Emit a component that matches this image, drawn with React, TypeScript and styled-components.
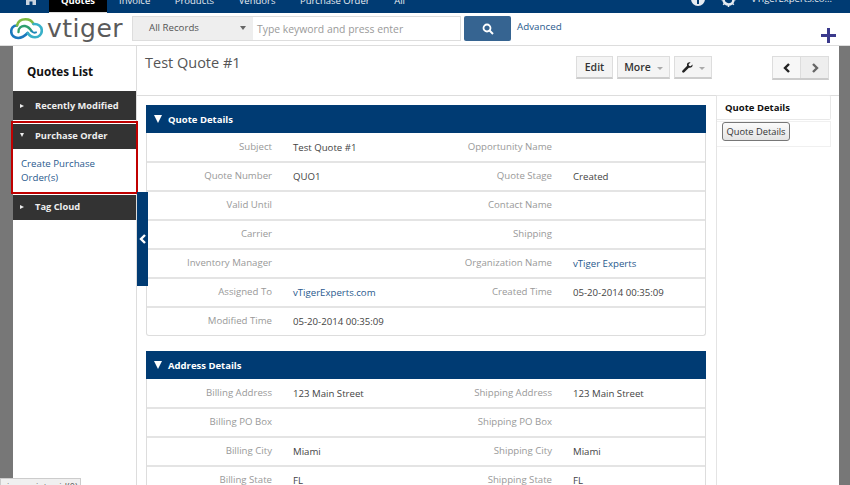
import styled, { createGlobalStyle } from 'styled-components'

const GlobalStyle = createGlobalStyle`
  html, body {
    margin: 0;
    padding: 0;
    overflow: hidden;
    background: #fff;
    font-family: 'Open Sans', 'Liberation Sans', sans-serif;
  }
  * { box-sizing: border-box; }
`

const navItems = ['Invoice', 'Products', 'Vendors', 'Purchase Order']

const quoteRows = [
  ['Subject', 'Test Quote #1', 'Opportunity Name', ''],
  ['Quote Number', 'QUO1', 'Quote Stage', 'Created'],
  ['Valid Until', '', 'Contact Name', ''],
  ['Carrier', '', 'Shipping', ''],
  ['Inventory Manager', '', 'Organization Name', 'vTiger Experts'],
  ['Assigned To', 'vTigerExperts.com', 'Created Time', '05-20-2014 00:35:09'],
  ['Modified Time', '05-20-2014 00:35:09', '', ''],
]

const addressRows = [
  ['Billing Address', '123 Main Street', 'Shipping Address', '123 Main Street'],
  ['Billing PO Box', '', 'Shipping PO Box', ''],
  ['Billing City', 'Miami', 'Shipping City', 'Miami'],
  ['Billing State', 'FL', 'Shipping State', 'FL'],
]

const linkValues = ['vTiger Experts', 'vTigerExperts.com']

function Logo() {
  return (
    <svg width="33" height="23" viewBox="0 0 33 23">
      <path d="M7 7.500C3 7.500 1.200 10.500 1.200 13.500c0 4 3.300 6.500 7 6.500 4.500 0 7-2.500 9.500-5" fill="none" stroke="#1b78bd" strokeWidth="2.600" strokeLinecap="round" />
      <path d="M7 7.500C8 3.500 11.500 1.300 15.500 1.300c3.500 0 6.500 1.700 8 4.700" fill="none" stroke="#7dbb42" strokeWidth="2.600" strokeLinecap="round" />
      <path d="M23.500 6c4.500-.5 8.300 2.500 8.300 6.500 0 4-3 6.800-6.800 6.800-3 0-5.500-1.500-7.300-4.300" fill="none" stroke="#38b0c8" strokeWidth="2.600" strokeLinecap="round" />
      <path d="M8.500 14c-.5-4 3-6.500 6.500-6 3 .5 5 2.500 6.500 5" fill="none" stroke="#2f9e6e" strokeWidth="2.400" strokeLinecap="round" />
      <path d="M21.500 13c1.200 1.500 3 2 4.500 1.300" fill="none" stroke="#1f86b8" strokeWidth="2" strokeLinecap="round" />
    </svg>
  )
}

function Wrench() {
  return (
    <svg width="11" height="11" viewBox="0 0 12 12">
      <path d="M11.500 2.600 9.400 4.600 7.600 4.200 7.200 2.500 9.300.5C7.700-.1 5.600.9 5.400 2.800c0 .5 0 1 .2 1.400L.6 9.300c-.7.7-.6 1.500-.1 2s1.300.6 2-.1l5-5c2.300.8 4.500-1 4-3.600z" fill="#222" />
    </svg>
  )
}

function Chevron({ dir, color }: { dir: 'left' | 'right'; color: string }) {
  return (
    <svg width="8" height="10" viewBox="0 0 8 10">
      <path d={dir === 'left' ? 'M6 1 2 5l4 4' : 'M2 1l4 4-4 4'} fill="none" stroke={color} strokeWidth="2.400" />
    </svg>
  )
}

function DetailBlock({ title, rows }: { title: string; rows: string[][] }) {
  return (
    <Block>
      <BlockHead>
        <HeadArrow />
        {title}
      </BlockHead>
      <BlockBody>
        {rows.map((row) => (
          <Row key={row[0]}>
            <Label>{row[0]}</Label>
            <Value $link={linkValues.includes(row[1])}>{row[1]}</Value>
            <Label>{row[2]}</Label>
            <Value $link={linkValues.includes(row[3])}>{row[3]}</Value>
          </Row>
        ))}
      </BlockBody>
    </Block>
  )
}

export default function App() {
  return (
    <Page>
      <GlobalStyle />
      <TopNav>
        <HomeIcon>
          <svg width="10" height="10" viewBox="0 0 10 10">
            <path d="M0 0h10v10H6.500V6.500h-3V10H0z" fill="#c9d3df" />
          </svg>
        </HomeIcon>
        <NavActive>Quotes</NavActive>
        {navItems.map((item) => (
          <NavItem key={item}>{item}</NavItem>
        ))}
        <NavItem>All</NavItem>
        <NavRight>
          <svg width="14" height="14" viewBox="0 0 14 14">
            <circle cx="7" cy="7" r="7" fill="#e6ebf1" />
            <rect x="6" y="6" width="2" height="6" fill="#003b73" />
          </svg>
          <GearIcon>
            <svg width="15" height="15" viewBox="0 0 15 15">
              <circle cx="7.500" cy="7.500" r="5" fill="none" stroke="#e6ebf1" strokeWidth="2.600" />
              <path d="M7.500 0v15M0 7.500h15M2.200 2.200l10.600 10.600M12.800 2.200 2.200 12.800" stroke="#e6ebf1" strokeWidth="1.500" strokeDasharray="2.500 10 2.500" />
            </svg>
          </GearIcon>
          <UserName>VTigerExperts.co...</UserName>
        </NavRight>
      </TopNav>

      <Header>
        <LogoWrap>
          <Logo />
          <LogoText>vtiger</LogoText>
        </LogoWrap>
        <Search>
          <RecordSelect>
            All Records
            <SelectCaret />
          </RecordSelect>
          <SearchInput>Type keyword and press enter</SearchInput>
        </Search>
        <SearchButton>
          <svg width="12" height="12" viewBox="0 0 12 12">
            <circle cx="5" cy="5" r="3.500" fill="none" stroke="#fff" strokeWidth="1.800" />
            <path d="m7.500 7.500 3.500 3.500" stroke="#fff" strokeWidth="2" />
          </svg>
        </SearchButton>
        <Advanced>Advanced</Advanced>
        <PlusIcon>
          <svg width="15" height="15" viewBox="0 0 15 15">
            <path d="M6 0h3v6h6v3H9v6H6V9H0V6h6z" fill="#3b3a8c" />
          </svg>
        </PlusIcon>
      </Header>

      <Body>
        <Strip />
        <Sidebar>
          <SideTitle>Quotes List</SideTitle>
          <Accordion $height={29}>
            <SmallArrow />
            Recently Modified
          </Accordion>
          <Highlight>
            <Accordion $height={25}>
              <SmallArrow $open />
              Purchase Order
            </Accordion>
            <AccordionBody>Create Purchase Order(s)</AccordionBody>
          </Highlight>
          <TagAccordion $height={25}>
            <SmallArrow />
            Tag Cloud
          </TagAccordion>
        </Sidebar>

        <Content>
          <CollapseHandle>
            <Chevron dir="left" color="#fff" />
          </CollapseHandle>
          <TitleRow>
            <Title>Test Quote #1</Title>
            <Actions>
              <ActionButton $width={37}>Edit</ActionButton>
              <ActionButton $width={53}>
                More
                <ButtonCaret />
              </ActionButton>
              <ActionButton $width={38}>
                <Wrench />
                <ButtonCaret />
              </ActionButton>
            </Actions>
            <Pager>
              <PageButton>
                <Chevron dir="left" color="#222" />
              </PageButton>
              <PageButton $muted>
                <Chevron dir="right" color="#666" />
              </PageButton>
            </Pager>
          </TitleRow>
          <Columns>
            <Details>
              <DetailBlock title="Quote Details" rows={quoteRows} />
              <DetailBlock title="Address Details" rows={addressRows} />
            </Details>
            <Related>
              <RelatedTab>Quote Details</RelatedTab>
              <RelatedBox>
                <RelatedButton>Quote Details</RelatedButton>
              </RelatedBox>
            </Related>
          </Columns>
        </Content>
        <Strip $right />
      </Body>

      <StatusBar>javascript:void(0);</StatusBar>
    </Page>
  )
}

const Page = styled.div`
  position: relative;
  width: 850px;
  height: 485px;
  overflow: hidden;
  display: flex;
  flex-direction: column;
`

const TopNav = styled.nav`
  height: 13px;
  flex: none;
  background: #003b73;
  display: flex;
  overflow: hidden;
  color: #e6ebf1;
  font-size: 9.500px;
  line-height: 13px;
`

const HomeIcon = styled.div`
  width: 49px;
  padding-left: 26px;
  margin-top: -5px;
`

const NavItem = styled.div`
  margin-top: -6px;
  padding: 0 12.500px 0 12px;
`

const NavActive = styled.div`
  width: 58px;
  background: #000;
  border-bottom: 1px solid #ddd;
  color: #fff;
  font-weight: 700;
  text-align: center;
  line-height: 1px;
`

const NavRight = styled.div`
  margin-left: auto;
  display: flex;
  align-items: flex-start;
  padding-right: 18px;
  margin-top: -8px;
`

const GearIcon = styled.div`
  margin-left: 16px;
`

const UserName = styled.div`
  margin-left: 15px;
  line-height: 13px;
`

const Header = styled.header`
  height: 33px;
  flex: none;
  border-bottom: 1px solid #ddd;
  display: flex;
  align-items: flex-start;
  padding-left: 10px;
  padding-top: 3px;
`

const LogoWrap = styled.div`
  width: 122px;
  height: 26px;
  display: flex;
  align-items: center;
`

const LogoText = styled.div`
  font-family: 'DejaVu Sans', sans-serif;
  font-size: 25px;
  letter-spacing: 0.5px;
  line-height: 26px;
  color: #5a5a5a;
  margin-left: 4px;
  margin-top: -1px;
`

const Search = styled.div`
  width: 329px;
  height: 25px;
  display: flex;
  border: 1px solid #ddd;
`

const RecordSelect = styled.div`
  width: 120px;
  background: #eee;
  color: #555;
  font-size: 9.700px;
  line-height: 22px;
  padding-left: 16px;
  position: relative;
`

const SelectCaret = styled.span`
  position: absolute;
  right: 7px;
  top: 9px;
  border: 3px solid transparent;
  border-top: 4px solid #666;
`

const SearchInput = styled.div`
  flex: 1;
  color: #9a9a9a;
  font-size: 10.400px;
  line-height: 24px;
  padding-left: 4px;
`

const SearchButton = styled.button`
  width: 47px;
  height: 25px;
  margin-left: 3px;
  background: #366491;
  border: none;
  border-radius: 2px;
  padding: 0;
  display: flex;
  align-items: center;
  justify-content: center;
`

const Advanced = styled.a`
  margin-left: 6px;
  font-size: 9.800px;
  line-height: 22px;
  color: #2a5a8e;
`

const PlusIcon = styled.div`
  margin-left: auto;
  margin-right: 14px;
  margin-top: 10px;
  height: 15px;
`

const Body = styled.div`
  flex: 1;
  display: flex;
  min-height: 0;
`

const Strip = styled.div<{ $right?: boolean }>`
  width: ${(p) => (p.$right ? '11px' : '13px')};
  flex: none;
  background: #777;
`

const Sidebar = styled.aside`
  width: 124px;
  flex: none;
  border-right: 1px solid #ddd;
`

const SideTitle = styled.div`
  height: 45px;
  padding: 17px 0 0 14px;
  color: #111;
  font-size: 11.700px;
  font-weight: 700;
  line-height: 16px;
`

const Accordion = styled.div<{ $height: number }>`
  height: ${(p) => p.$height}px;
  margin-bottom: 2px;
  background: #333;
  color: #eee;
  font-size: 9.300px;
  font-weight: 700;
  display: flex;
  align-items: center;
  padding-left: 7px;
`

const TagAccordion = styled(Accordion)`
  padding-bottom: 2px;
`

const SmallArrow = styled.span<{ $open?: boolean }>`
  width: 0;
  height: 0;
  margin-right: 11px;
  border-style: solid;
  border-color: transparent;
  ${(p) =>
    p.$open
      ? 'border-width: 4px 2.500px 0; border-top-color: #eee;'
      : 'border-width: 2.500px 0 2.500px 4px; border-left-color: #eee;'}
`

const Highlight = styled.div`
  outline: 2px solid #c00000;
  outline-offset: -1px;
  margin: 0 -1px 2px -1px;
  padding: 2px 1px 0 1px;
  height: 71px;
  & > div:first-child {
    margin-bottom: 0;
    padding-bottom: 3px;
  }
`

const AccordionBody = styled.div`
  padding: 8px 30px 0 8px;
  color: #2a5a8e;
  font-size: 9.700px;
  line-height: 13.500px;
`

const Content = styled.main`
  flex: 1;
  position: relative;
  min-width: 0;
`

const CollapseHandle = styled.div`
  position: absolute;
  left: 0;
  top: 146px;
  width: 11px;
  height: 94px;
  background: #003b73;
  display: flex;
  align-items: center;
  justify-content: center;
  z-index: 2;
`

const TitleRow = styled.div`
  height: 50px;
  display: flex;
  align-items: flex-start;
  padding: 10px 10px 0 8px;
  border-bottom: 1px solid #ddd;
`

const Title = styled.h1`
  margin: -3px auto 0 0;
  color: #555;
  font-size: 14.500px;
  font-weight: 400;
  line-height: 20px;
`

const Actions = styled.div`
  display: flex;
  gap: 4px;
  margin-right: 60px;
`

const ActionButton = styled.div<{ $width: number }>`
  width: ${(p) => p.$width}px;
  height: 23px;
  display: flex;
  align-items: center;
  justify-content: center;
  background: #f4f4f4;
  border: 1px solid #ddd;
  border-bottom: 2px solid #ccc;
  color: #333;
  font-size: 10.500px;
  font-weight: 600;
`

const ButtonCaret = styled.span`
  margin-left: 6px;
  margin-top: 2px;
  border: 3px solid transparent;
  border-top: 3px solid #aaa;
  border-bottom: none;
  width: 0;
`

const Pager = styled.div`
  display: flex;
  border: 1px solid #ddd;
  border-bottom: 2px solid #ccc;
`

const PageButton = styled.div<{ $muted?: boolean }>`
  width: ${(p) => (p.$muted ? '28px' : '27px')};
  height: 21px;
  display: flex;
  align-items: center;
  justify-content: center;
  background: ${(p) => (p.$muted ? '#eee' : '#f7f7f7')};
  border-left: ${(p) => (p.$muted ? '1px solid #ddd' : 'none')};
`

const Columns = styled.div`
  display: flex;
  align-items: stretch;
  height: 400px;
`

const Details = styled.div`
  width: 579px;
  padding: 9px 10px 0 9px;
  flex: none;
`

const Block = styled.section`
  margin-bottom: 15px;
`

const BlockHead = styled.div`
  height: 28px;
  background: #003b73;
  color: #fff;
  font-size: 9.500px;
  font-weight: 700;
  display: flex;
  align-items: center;
  padding-left: 8px;
`

const HeadArrow = styled.span`
  margin-right: 6px;
  border-style: solid;
  border-width: 8px 4.500px 0;
  border-color: #fff transparent transparent;
`

const BlockBody = styled.div`
  padding-top: 1px;
  border: 1px solid #ddd;
  border-top: none;
  border-radius: 0 0 3px 3px;
`

const Row = styled.div`
  display: grid;
  grid-template-columns: 135px 144px 136px 1fr;
  height: 29px;
  border-bottom: 2px solid #e4e4e4;
  &:last-child {
    border-bottom: none;
    height: 27px;
  }
`

const Label = styled.div`
  padding: 5px 10px 0 0;
  text-align: right;
  color: #999;
  font-size: 9.650px;
  line-height: 16px;
  white-space: nowrap;
`

const Value = styled.div<{ $link?: boolean }>`
  padding: 6px 0 0 11px;
  color: ${(p) => (p.$link ? '#2a5a8e' : '#444')};
  font-size: 9.650px;
  line-height: 16px;
`

const Related = styled.div`
  flex: 1;
  border-left: 1px solid #e4e4e4;
  margin-top: -1px;
`

const RelatedTab = styled.div`
  width: 114px;
  height: 25px;
  padding-left: 8px;
  border: 1px solid #e8e8e8;
  border-left: none;
  border-radius: 0 2px 2px 0;
  color: #111;
  font-size: 9.500px;
  font-weight: 700;
  line-height: 24px;
`

const RelatedBox = styled.div`
  width: 114px;
  height: 26px;
  margin-top: 1px;
  padding: 0 0 0 5px;
  border: 1px solid #f0f0f0;
  border-left: none;
`

const RelatedButton = styled.button`
  display: block;
  height: 19px;
  width: 68px;
  padding: 0;
  border: 1px solid #777;
  border-radius: 3px;
  background: linear-gradient(#fbfbfb, #e4e4e4);
  color: #333;
  font-family: 'Open Sans', sans-serif;
  font-size: 9.300px;
`

const StatusBar = styled.div`
  position: absolute;
  left: 0;
  top: 478px;
  width: 81px;
  height: 7px;
  overflow: hidden;
  background: #f0f0f0;
  border: 1px solid #ccc;
  border-bottom: none;
  color: #555;
  font-size: 9px;
  line-height: 12px;
  padding: 2px 0 0 6px;
`
